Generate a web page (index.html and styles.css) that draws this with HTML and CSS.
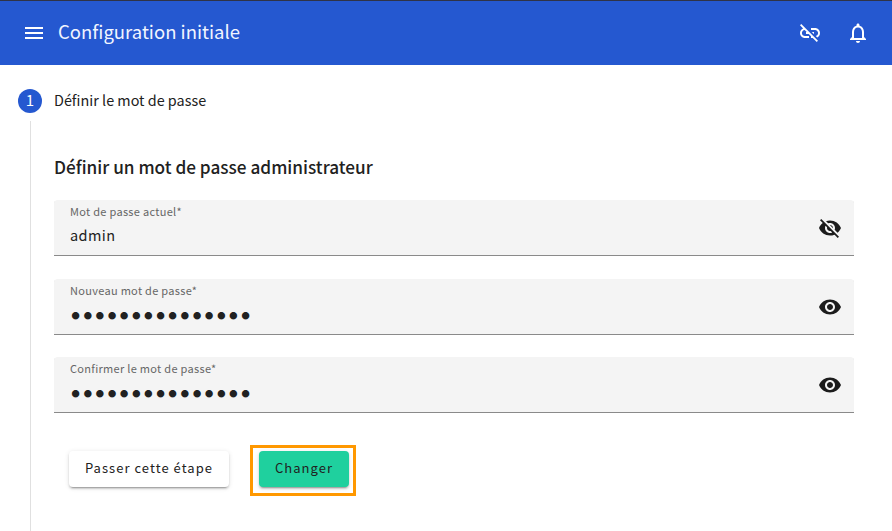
FILE: index.html
```html
<!DOCTYPE html>
<html lang="fr">
<head>
<meta charset="utf-8">
<title>Configuration initiale</title>
<link rel="stylesheet" href="styles.css">
</head>
<body>
<header class="topbar">
  <svg class="icon menu-icon" viewBox="0 0 24 24"><path d="M3 18h18v-2H3v2zm0-5h18v-2H3v2zm0-7v2h18V6H3z"/></svg>
  <h1 class="title">Configuration initiale</h1>
  <svg class="icon link-icon" viewBox="0 0 24 24"><path d="M17 7h-4v1.9h4c1.71 0 3.1 1.39 3.1 3.1 0 1.43-.98 2.63-2.31 2.98l1.46 1.46C20.88 15.61 22 13.95 22 12c0-2.76-2.24-5-5-5zm-1 4h-2.19l2 2H16zM2 4.27l3.11 3.11C3.29 8.12 2 9.91 2 12c0 2.76 2.24 5 5 5h4v-1.9H7c-1.71 0-3.1-1.39-3.1-3.1 0-1.59 1.21-2.9 2.76-3.07L8.73 11H8v2h2.73L13 15.27V17h1.73l4.01 4L20 19.74 3.27 3 2 4.27z"/></svg>
  <svg class="icon bell-icon" viewBox="0 0 24 24"><path d="M12 22c1.1 0 2-.9 2-2h-4c0 1.1.89 2 2 2zm6-6v-5c0-3.07-1.64-5.64-4.5-6.32V4c0-.83-.67-1.5-1.5-1.5s-1.5.67-1.5 1.5v.68C7.63 5.36 6 7.92 6 11v5l-2 2v1h16v-1l-2-2zm-2 1H8v-6c0-2.48 1.51-4.5 4-4.5s4 2.02 4 4.5v6z"/></svg>
</header>
<main class="stepper">
  <div class="step-head">
    <span class="step-num">1</span>
    <span class="step-label">Définir le mot de passe</span>
  </div>
  <section class="step-body">
    <h2 class="heading">Définir un mot de passe administrateur</h2>
    <div class="field">
      <div class="field-text">
        <span class="field-label">Mot de passe actuel*</span>
        <span class="field-value">admin</span>
      </div>
      <svg class="icon eye" viewBox="0 0 24 24"><path d="M12 7c2.76 0 5 2.24 5 5 0 .65-.13 1.26-.36 1.83l2.92 2.92c1.51-1.26 2.7-2.89 3.43-4.75-1.73-4.39-6-7.5-11-7.5-1.4 0-2.74.25-3.98.7l2.16 2.16C10.74 7.13 11.35 7 12 7zM2 4.27l2.28 2.28.46.46C3.08 8.3 1.78 10.02 1 12c1.73 4.39 6 7.5 11 7.5 1.55 0 3.03-.3 4.38-.84l.42.42L19.73 22 21 20.73 3.27 3 2 4.27zM7.53 9.8l1.55 1.55c-.05.21-.08.43-.08.65 0 1.66 1.34 3 3 3 .22 0 .44-.03.65-.08l1.55 1.55c-.67.33-1.41.53-2.2.53-2.76 0-5-2.24-5-5 0-.79.2-1.53.53-2.2zm4.31-.78l3.15 3.15.02-.16c0-1.66-1.34-3-3-3l-.17.01z"/></svg>
    </div>
    <div class="field">
      <div class="field-text">
        <span class="field-label">Nouveau mot de passe*</span>
        <span class="field-value dots">●●●●●●●●●●●●●●●</span>
      </div>
      <svg class="icon eye" viewBox="0 0 24 24"><path d="M12 4.5C7 4.5 2.73 7.61 1 12c1.73 4.39 6 7.5 11 7.5s9.27-3.11 11-7.5c-1.73-4.39-6-7.5-11-7.5zM12 17c-2.76 0-5-2.24-5-5s2.24-5 5-5 5 2.24 5 5-2.24 5-5 5zm0-8c-1.66 0-3 1.34-3 3s1.34 3 3 3 3-1.34 3-3-1.34-3-3-3z"/></svg>
    </div>
    <div class="field">
      <div class="field-text">
        <span class="field-label">Confirmer le mot de passe*</span>
        <span class="field-value dots">●●●●●●●●●●●●●●●</span>
      </div>
      <svg class="icon eye" viewBox="0 0 24 24"><path d="M12 4.5C7 4.5 2.73 7.61 1 12c1.73 4.39 6 7.5 11 7.5s9.27-3.11 11-7.5c-1.73-4.39-6-7.5-11-7.5zM12 17c-2.76 0-5-2.24-5-5s2.24-5 5-5 5 2.24 5 5-2.24 5-5 5zm0-8c-1.66 0-3 1.34-3 3s1.34 3 3 3 3-1.34 3-3-1.34-3-3-3z"/></svg>
    </div>
    <div class="actions">
      <button class="btn btn-skip" type="button">Passer cette étape</button>
      <div class="highlight"><button class="btn btn-primary" type="button">Changer</button></div>
    </div>
  </section>
</main>
</body>
</html>
```
FILE: styles.css
```css
* { box-sizing: border-box; }
html, body { margin: 0; height: 100%; overflow: hidden; }
body {
  background: #fff;
  color: #212121;
  font-family: "Noto Sans CJK JP", "Noto Sans", sans-serif;
}
.icon { display: block; width: 24px; height: 24px; fill: currentColor; flex: none; }
.topbar {
  height: 65px;
  border-top: 1px solid #2f3347;
  background: #2558d0;
  color: #fff;
  display: flex;
  align-items: center;
  padding: 0 22px;
}
.title {
  margin: 0 0 5px 12px;
  flex: 1;
  font-size: 18.5px;
  line-height: 26px;
  font-weight: 400;
  letter-spacing: 0;
  color: #f1f5ff;
}
.link-icon { margin-right: 24px; }
.stepper { padding: 24px 38px 0 18px; }
.step-head { display: flex; align-items: center; height: 24px; }
.step-num {
  width: 24px; height: 24px; border-radius: 50%;
  background: #2558d0; color: #fff;
  font-size: 15px; line-height: 22px; text-align: center;
}
.step-label { margin: 0 0 3px 12px; font-size: 14.4px; line-height: 20px; }
.step-body {
  margin: 8px 0 0 12px;
  padding: 34px 0 0 23px;
  border-left: 1px solid #e0e0e0;
  height: 420px;
}
.heading { margin: 0; font-size: 17.2px; line-height: 24px; font-weight: 500; }
.field {
  height: 56px;
  margin: 21.3px 0 0;
  padding: 0 12px 0 16px;
  display: flex;
  align-items: center;
  background: #f4f4f4;
  box-shadow: inset 0 -1px 0 #8a8a8a;
  border-radius: 4px 4px 0 0;
}
.field + .field { margin-top: 22.4px; }
.field-text { flex: 1; align-self: flex-start; padding-top: 3px; display: flex; flex-direction: column; }
.field-label { font-size: 11px; line-height: 16px; letter-spacing: 0.3px; color: #666; }
.field-value { font-size: 14.5px; line-height: 24px; letter-spacing: 0.4px; margin-top: 4px; }
.dots { font-size: 8.2px; line-height: 24px; letter-spacing: 3.95px; margin-top: 5px; padding-left: 1.5px; }
.eye { color: #1c1c1c; }
.actions { display: flex; align-items: flex-start; margin: 32px 0 0 15px; }
.btn {
  height: 36px;
  border: 0;
  border-radius: 4px;
  padding: 0 0 3px;
  font: 400 13px "Noto Sans CJK JP", "Noto Sans", sans-serif;
  letter-spacing: 1.05px;
  color: #212121;
  box-shadow: 0 3px 1px -2px rgba(0,0,0,.2), 0 2px 2px 0 rgba(0,0,0,.14), 0 1px 5px 0 rgba(0,0,0,.12);
}
.btn-skip { width: 160px; margin-top: 6px; background: #fff; }
.highlight {
  margin-left: 21px;
  padding: 3px 4px 6px 6px;
  border: 3px solid #ff9800;
}
.btn-primary { display: block; width: 90px; background: #1fd09e; }
```
